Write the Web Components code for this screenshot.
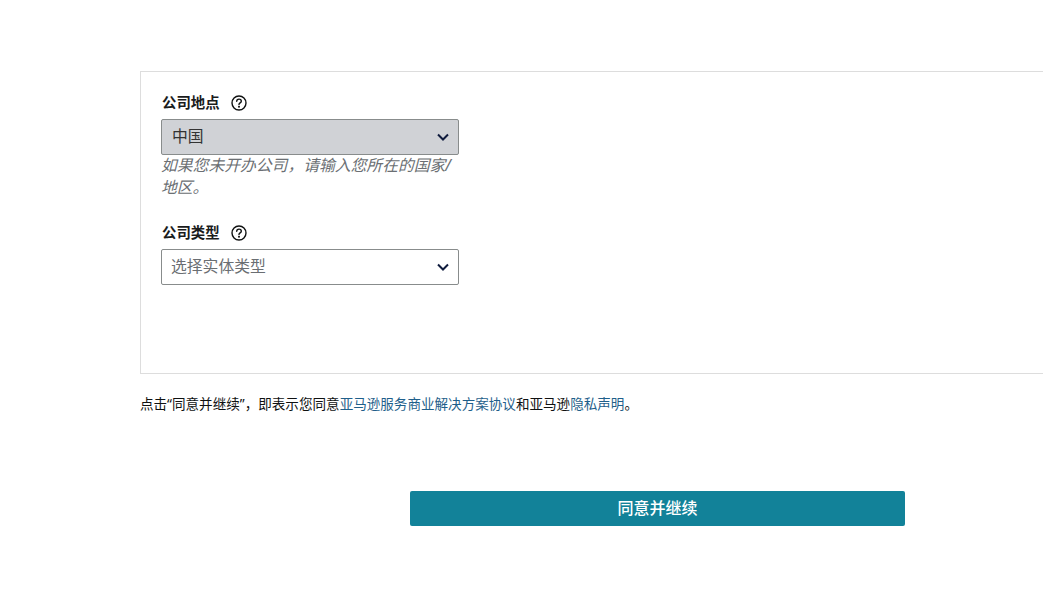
<!DOCTYPE html>
<html lang="zh"><head><meta charset="utf-8"><title>公司信息</title>
<style>
html,body{margin:0;padding:0;background:#fff;overflow:hidden;height:591px}
body{font-family:"Noto Sans","Noto Sans CJK SC",sans-serif;color:#0f1111}
</style></head><body>
<reg-page>
  <reg-card>
    <reg-field label="公司地点" value="中国" filled hint="如果您未开办公司，请输入您所在的国家/地区。"></reg-field>
    <reg-field label="公司类型" value="选择实体类型" placeholder style="margin-top:25px"></reg-field>
  </reg-card>
  <reg-note>点击“同意并继续”，即表示您同意<a href="#">亚马逊服务商业解决方案协议</a>和亚马逊<a href="#">隐私声明</a>。</reg-note>
  <reg-button>同意并继续</reg-button>
</reg-page>
<script>
function def(name, css, html){
  customElements.define(name, class extends HTMLElement{
    connectedCallback(){
      if(this.shadowRoot) return;
      const r=this.attachShadow({mode:'open'});
      r.innerHTML='<style>'+css+'</style>'+(typeof html==='function'?html(this):html);
    }
  });
}
def('reg-page',':host{display:flex;flex-direction:column;padding:71px 0 0 140px;width:1000px;box-sizing:border-box}','<slot></slot>');
def('reg-card',':host{display:block;box-sizing:border-box;width:920px;height:303px;border:1px solid #ddd;padding:20px 20px 0 20px}','<slot></slot>');
def('reg-note',`:host{display:block;margin-top:20px;font-size:13.57px;line-height:20px;color:#0f1111}
::slotted(a){color:#1f5f8b;text-decoration:none}`,'<slot></slot>');
def('reg-button',`:host{display:flex;align-items:center;justify-content:center;box-sizing:border-box;width:495px;height:35px;margin:77px 0 0 270px;padding-bottom:1px;background:#128299;border-radius:2px;color:#fff;font-size:16px;font-weight:500;line-height:34px}`,'<slot></slot>');
const help='<svg width="16" height="16" viewBox="0 0 16 16" fill="none" stroke="#0f1111" aria-hidden="true"><circle cx="8" cy="8" r="7" stroke-width="1.4"/><path d="M5.7 6.3c0-1.3 1.1-2.2 2.3-2.2s2.3.9 2.3 2.1c0 1.7-2.3 1.7-2.3 3.3" stroke-width="1.4" stroke-linecap="round"/><circle cx="8" cy="11.8" r="1" fill="#0f1111" stroke="none"/></svg>';
const chev='<svg width="12" height="8" viewBox="0 0 12 8" fill="none" stroke="#0f1b3d" stroke-width="2" aria-hidden="true"><path d="M1 1.5l5 5 5-5"/></svg>';
def('reg-field',`:host{display:block;width:298px}
.lab{display:flex;align-items:center;gap:11px;height:20px;font-size:14.4px;font-weight:700;line-height:20px;margin:1px 0 6px;padding-left:1px;color:#1a1c1c}
.sel{display:flex;align-items:center;justify-content:space-between;box-sizing:border-box;height:36px;border:1px solid #888c8c;border-radius:2px;padding:0 9px 3px 9px;font-size:15.8px;color:#6a6e72;background:#fff}
.sel svg{margin-top:3px}
.sel.f{background:#d0d2d6;color:#333;padding-left:10px}
.hint{font-size:15.8px;font-style:italic;line-height:22px;color:#6b6f73;height:44px;margin-top:-1px}`,
h=>`<div class="lab"><span>${h.getAttribute('label')}</span>${help}</div>
<div class="sel ${h.hasAttribute('filled')?'f':''}"><span>${h.getAttribute('value')}</span>${chev}</div>
${h.getAttribute('hint')?`<div class="hint">${h.getAttribute('hint')}</div>`:''}`);
</script>
</body></html>
